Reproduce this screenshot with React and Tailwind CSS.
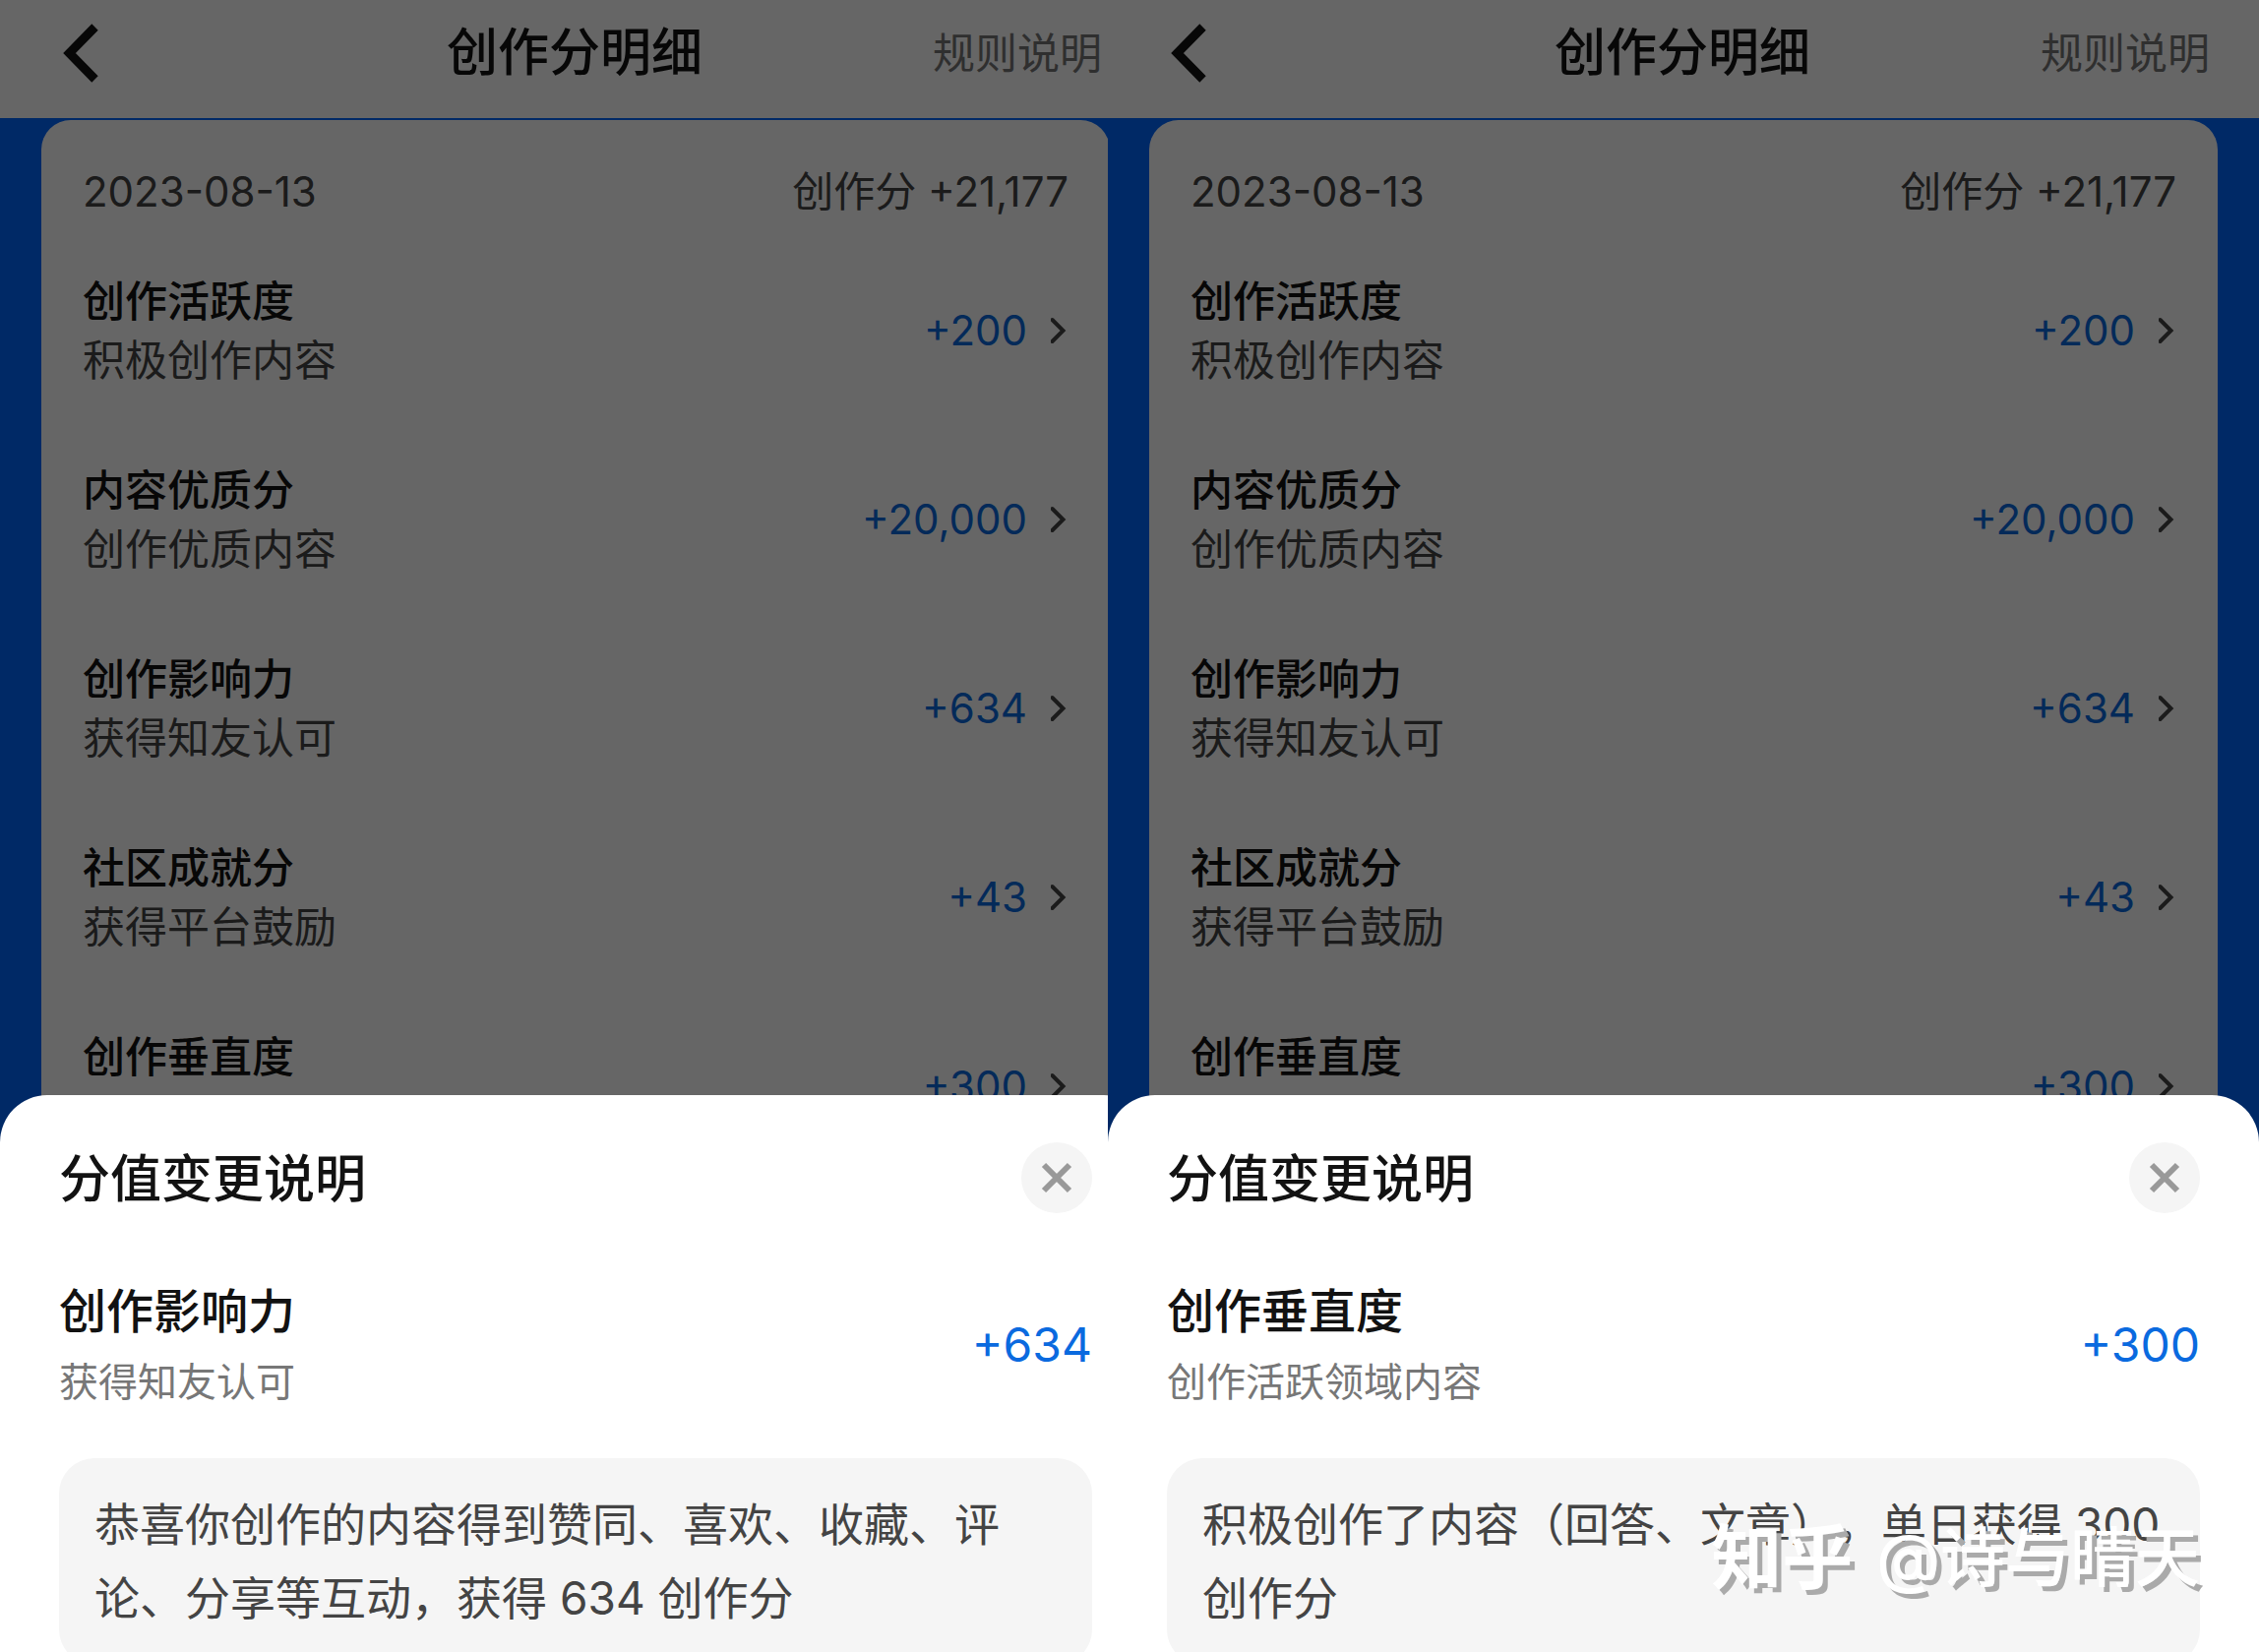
import React from 'react';

const scoreRows = [
  { title: '创作活跃度', subtitle: '积极创作内容', value: '+200' },
  { title: '内容优质分', subtitle: '创作优质内容', value: '+20,000' },
  { title: '创作影响力', subtitle: '获得知友认可', value: '+634' },
  { title: '社区成就分', subtitle: '获得平台鼓励', value: '+43' },
  { title: '创作垂直度', subtitle: '创作活跃领域内容', value: '+300' }
];

const BackIcon = () => (
  <svg viewBox="0 0 36 60" className="h-[60px] w-9" fill="none" stroke="#121212" strokeWidth="9">
    <path d="M32.500 3.500 6.500 30l26 26.500" strokeLinejoin="miter" />
  </svg>
);

const RowArrow = () => (
  <svg viewBox="0 0 18 28" className="h-7 w-[18px]" fill="none" stroke="#444" strokeWidth="4">
    <path d="M1.500 3l11 11-11 11" strokeLinecap="round" strokeLinejoin="miter" />
  </svg>
);

const CloseIcon = () => (
  <svg viewBox="0 0 36 36" className="size-9" fill="none" stroke="#999" strokeWidth="6">
    <path d="M5 5l26 26M31 5 5 31" />
  </svg>
);

const ScoreRow = ({ title, subtitle, value }) => (
  <li className="flex items-center justify-between">
    <div className="text-[43px] leading-[60px]">
      <p className="font-medium text-[#121212]">{title}</p>
      <p className="text-[#444]">{subtitle}</p>
    </div>
    <button type="button" className="flex items-center gap-6 text-[42px] leading-[60px] text-[#0a6adf]">
      {value}
      <RowArrow />
    </button>
  </li>
);

const ScorePage = ({ detail }) => (
  <div className="relative flex h-full flex-col bg-[#0066ff]">
    <header className="grid h-[120px] shrink-0 grid-cols-[1fr_auto_1fr] items-center bg-white pr-[50px] pb-3 pl-16">
      <button type="button" aria-label="返回" className="justify-self-start">
        <BackIcon />
      </button>
      <h1 className="pr-4 text-[52px] leading-[60px] font-medium text-[#121212]">创作分明细</h1>
      <a href="#rules" className="justify-self-end text-[43px] leading-[60px] text-[#777]">
        规则说明
      </a>
    </header>

    <main className="mx-[42px] mt-0.5 grow rounded-t-[30px] bg-white px-[42px] pt-[43px]">
      <div className="flex justify-between text-[42px] leading-[60px] text-[#444]">
        <time>2023-08-13</time>
        <p>创作分 +21,177</p>
      </div>
      <ul className="mt-[51px] flex flex-col gap-[72px]">
        {scoreRows.map((row) => (
          <ScoreRow key={row.title} {...row} />
        ))}
      </ul>
    </main>

    <div className="absolute inset-0 bg-black/60" />

    <section className="absolute inset-x-0 bottom-0 h-[566px] overflow-hidden rounded-t-[48px] bg-white px-[60px] pt-[46px]">
      <div className="flex items-center justify-between">
        <h2 className="pt-1 text-[52px] leading-[72px] font-medium text-[#121212]">分值变更说明</h2>
        <button
          type="button"
          aria-label="关闭"
          className="flex size-[72px] items-center justify-center rounded-full bg-[#f5f5f5]"
        >
          <CloseIcon />
        </button>
      </div>
      <div className="mt-[62px] flex items-center justify-between">
        <div>
          <h3 className="text-[48px] leading-[72px] font-medium text-[#121212]">{detail.title}</h3>
          <p className="text-[40px] leading-[72px] text-[#777]">{detail.subtitle}</p>
        </div>
        <p className="pb-1 text-[48px] leading-[72px] text-[#0a6adf]">{detail.value}</p>
      </div>
      <p className="mt-[41px] rounded-[36px] bg-[#f5f5f5] px-9 py-[30px] text-[46px] leading-[75px] text-[#444] [text-spacing-trim:space-all]">
        {detail.message}
      </p>
    </section>
  </div>
);

const App = () => (
  <div className="relative grid h-screen grid-cols-[1126fr_1170fr] overflow-hidden font-[Inter,'Noto_Sans_CJK_SC',sans-serif]">
    {/* the first page runs a little under the second one */}
    <div className="overflow-hidden">
      <div className="h-full w-[calc(100%+44px)]">
        <ScorePage
          detail={{
            title: '创作影响力',
            subtitle: '获得知友认可',
            value: '+634',
            message: '恭喜你创作的内容得到赞同、喜欢、收藏、评论、分享等互动，获得 634 创作分'
          }}
        />
      </div>
    </div>
    <ScorePage
      detail={{
        title: '创作垂直度',
        subtitle: '创作活跃领域内容',
        value: '+300',
        message: '积极创作了内容（回答、文章），单日获得 300 创作分'
      }}
    />
    <p className="absolute right-[60px] bottom-[52px] flex items-center gap-6 text-[66px] leading-[88px] font-medium text-white [text-shadow:5px_5px_0_#aaa]">
      <span className="text-[72px] font-bold">知乎</span>
      <span>@诗与晴天</span>
    </p>
  </div>
);

export default App;
